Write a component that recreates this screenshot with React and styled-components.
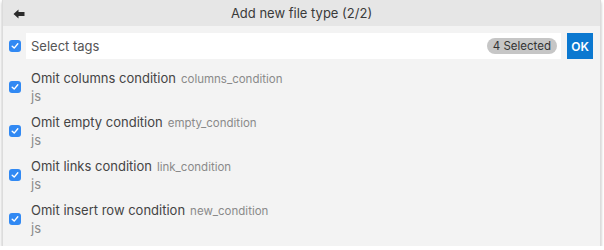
import React from 'react';
import styled, { createGlobalStyle } from 'styled-components';

const items = [
    { title: 'Omit columns condition', id: 'columns_condition', ext: 'js' },
    { title: 'Omit empty condition', id: 'empty_condition', ext: 'js' },
    { title: 'Omit links condition', id: 'link_condition', ext: 'js' },
    { title: 'Omit insert row condition', id: 'new_condition', ext: 'js' },
];

function Check() {
    return (
        <CheckBox>
            <svg width="8" height="8" viewBox="0 0 8 8">
                <path d="M1.2 4.2 L3.2 6.1 L6.8 1.8" fill="none" stroke="#fff" strokeWidth="1.4" strokeLinecap="round" strokeLinejoin="round" />
            </svg>
        </CheckBox>
    );
}

export default function App() {
    return (
        <>
            <GlobalStyle />
            <Panel>
                <Header>
                    <BackButton>
                        <svg width="12" height="10" viewBox="0 0 12 10">
                            <path d="M0.5 5 L5.5 0.5 L5.5 3 L11.5 3 L11.5 7 L5.5 7 L5.5 9.5 Z" fill="#2b2b2b" />
                        </svg>
                    </BackButton>
                    <Title>Add new file type (2/2)</Title>
                </Header>

                <SearchRow>
                    <Check />
                    <Field>
                        <Placeholder>Select tags</Placeholder>
                        <Badge>4 Selected</Badge>
                    </Field>
                    <OkButton>OK</OkButton>
                </SearchRow>

                <List>
                    {items.map((item) => (
                        <Item key={item.id}>
                            <Check />
                            <ItemText>
                                <TitleLine>
                                    <ItemTitle>{item.title}</ItemTitle>
                                    <ItemId>{item.id}</ItemId>
                                </TitleLine>
                                <Ext>{item.ext}</Ext>
                            </ItemText>
                        </Item>
                    ))}
                </List>
            </Panel>
        </>
    );
}

const GlobalStyle = createGlobalStyle`
    body {
        margin: 0;
        background: #ffffff;
        font-family: Inter, "Liberation Sans", sans-serif;
    }
`;

const Panel = styled.div`
    margin: 0 3px 0 2px;
    height: 246px;
    box-sizing: border-box;
    background: #f3f3f3;
    border-left: 1px solid #dcdcdc;
    border-right: 1px solid #dcdcdc;
    box-shadow: 0 2px 3px rgba(0, 0, 0, 0.28);
    display: flex;
    flex-direction: column;
`;

const Header = styled.div`
    height: 26px;
    background: #e6e6e6;
    display: flex;
    align-items: center;
    justify-content: center;
    position: relative;
`;

const BackButton = styled.div`
    position: absolute;
    left: 10px;
    top: 9px;
    display: flex;
`;

const Title = styled.span`
    font-size: 13px;
    color: #3a3a3a;
`;

const SearchRow = styled.div`
    display: flex;
    align-items: center;
    padding: 7px 7px 0 6px;
    height: 26px;
`;

const CheckBox = styled.span`
    width: 12px;
    height: 12px;
    border-radius: 3px;
    background: #3189f3;
    display: flex;
    align-items: center;
    justify-content: center;
    flex-shrink: 0;
`;

const Field = styled.div`
    flex: 1;
    height: 26px;
    margin-left: 5px;
    background: #ffffff;
    display: flex;
    align-items: center;
    justify-content: space-between;
    padding: 0 4px 0 5px;
`;

const Placeholder = styled.span`
    font-size: 13px;
    color: #555;
`;

const Badge = styled.span`
    background: #c6c6c6;
    color: #333;
    font-size: 11.5px;
    height: 16px;
    line-height: 16px;
    padding: 0 6px;
    border-radius: 8px;
`;

const OkButton = styled.button`
    margin-left: 6px;
    width: 26px;
    height: 26px;
    border: none;
    padding: 0;
    background: #0b78d0;
    color: #fff;
    font-family: inherit;
    font-weight: 600;
    font-size: 12px;
`;

const List = styled.div`
    display: flex;
    flex-direction: column;
    padding: 6px 0 0 6px;
`;

const Item = styled.div`
    display: flex;
    align-items: center;
    height: 44px;
`;

const ItemText = styled.div`
    display: flex;
    flex-direction: column;
    margin-left: 10px;
    gap: 2px;
`;

const TitleLine = styled.div`
    display: flex;
    align-items: baseline;
    gap: 5px;
`;

const ItemTitle = styled.span`
    font-size: 13px;
    color: #444;
`;

const ItemId = styled.span`
    font-size: 11.5px;
    color: #8a8a8a;
`;

const Ext = styled.span`
    font-size: 13px;
    color: #8a8a8a;
`;
